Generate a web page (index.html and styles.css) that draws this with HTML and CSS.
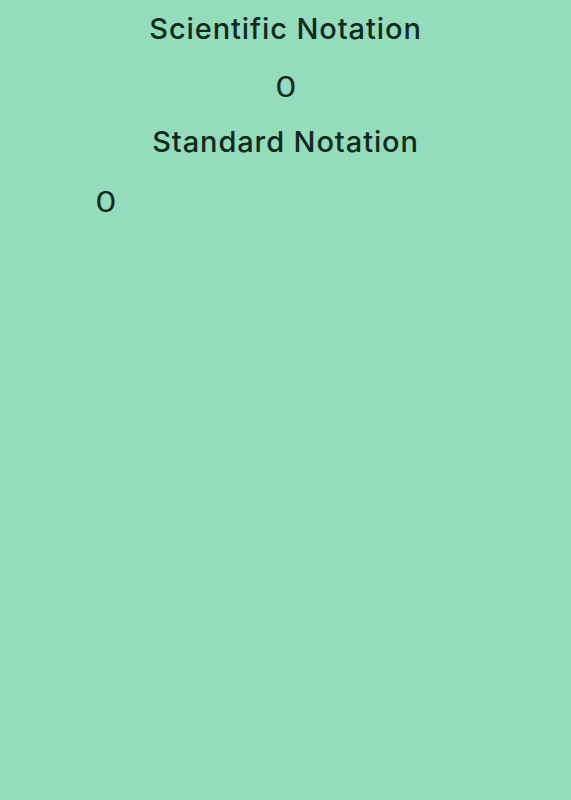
FILE: index.html
```html
<!DOCTYPE html>
<html lang="en">
<head>
<meta charset="utf-8">
<title>Notation</title>
<link rel="stylesheet" href="styles.css">
</head>
<body>
<main class="page">
  <h2 class="heading">Scientific Notation</h2>
  <p class="value value-center"><span class="digit">0</span></p>
  <h2 class="heading heading-second">Standard Notation</h2>
  <p class="value value-left"><span class="digit">0</span></p>
</main>
</body>
</html>
```

FILE: styles.css
```css
html, body {
  margin: 0;
  padding: 0;
  background: #94dcbc;
  height: 100%;
}

.page {
  font-family: "Inter", "Lato", sans-serif;
  color: #0f2a1e;
  display: flex;
  flex-direction: column;
  padding-top: 9px;
}

.heading {
  margin: 0;
  font-size: 29px;
  font-weight: 500;
  letter-spacing: 0.9px;
  line-height: 40px;
  text-align: center;
}

.heading-second {
  margin-top: 15px;
}

.value {
  margin: 18px 0 0;
  font-size: 28px;
  font-weight: 400;
  line-height: 40px;
}

.value-left {
  margin-top: 20px;
  padding-left: 97px;
}

.value-center {
  text-align: center;
}

.digit {
  display: inline-block;
  transform: scaleX(1.2);
}
```
